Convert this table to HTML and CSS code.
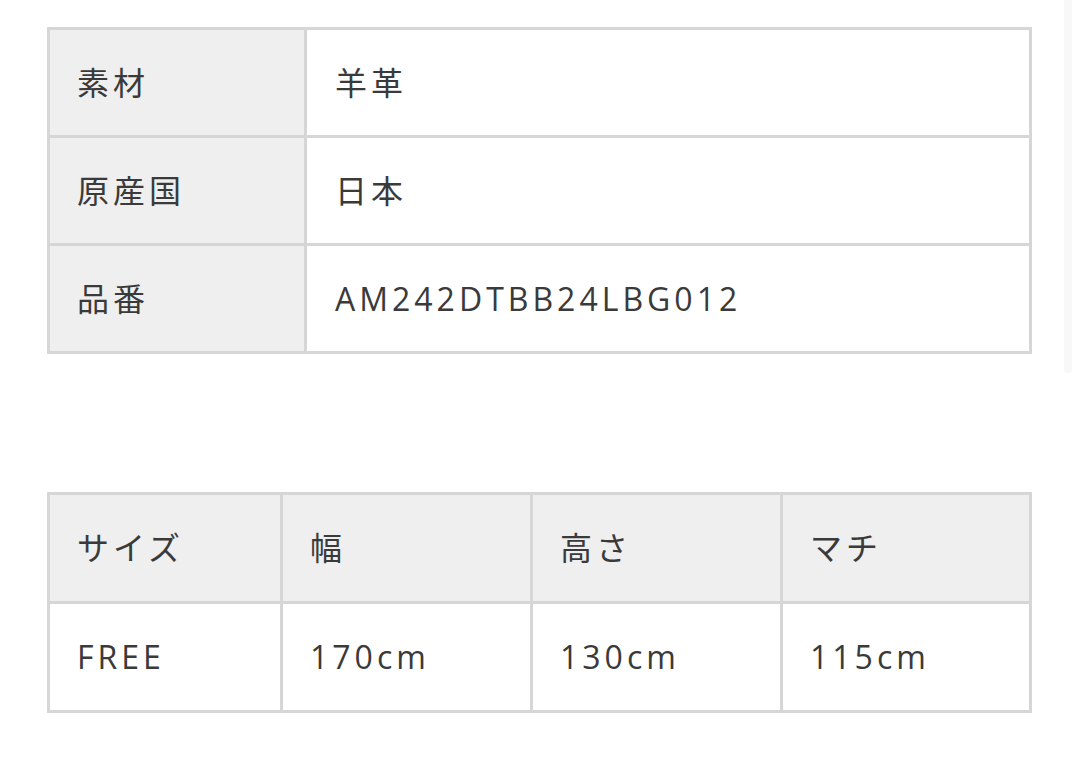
FILE: index.html
```html
<!DOCTYPE html>
<html lang="ja">
<head>
    <meta charset="UTF-8">
    <meta name="viewport" content="width=device-width, initial-scale=1.0">
    <title>商品詳細</title>
    <link rel="stylesheet" href="styles.css">
</head>
<body>
    <div class="page">
        <table class="spec spec-info">
            <tr>
                <th>素材</th>
                <td>羊革</td>
            </tr>
            <tr>
                <th>原産国</th>
                <td>日本</td>
            </tr>
            <tr>
                <th>品番</th>
                <td>AM242DTBB24LBG012</td>
            </tr>
        </table>

        <table class="spec spec-size">
            <tr>
                <th>サイズ</th>
                <th>幅</th>
                <th>高さ</th>
                <th>マチ</th>
            </tr>
            <tr>
                <td>FREE</td>
                <td>170cm</td>
                <td>130cm</td>
                <td>115cm</td>
            </tr>
        </table>
    </div>
    <div class="scroll-track"></div>
</body>
</html>
```

FILE: styles.css
```css
body {
    margin: 0;
    background: #fff;
    font-family: "Open Sans", "Noto Sans CJK JP", sans-serif;
    color: #3a3a3a;
}
.page {
    padding: 27px 0 0 47px;
    width: 985px;
    display: flex;
    flex-direction: column;
    gap: 138px;
}
.spec {
    width: 985px;
    border-collapse: collapse;
    border: 3px solid #d6d6d6;
    table-layout: fixed;
}
.spec th,
.spec td {
    border: 3px solid #d6d6d6;
    font-size: 32px;
    font-weight: normal;
    letter-spacing: 4px;
    text-align: left;
    padding: 0 0 0 27px;
    line-height: 1;
}
.spec th {
    background: #efefef;
}
.spec-info tr {
    height: 108px;
}
.spec-info th {
    width: 227px;
}
.spec-info td {
    padding-left: 28px;
}
.spec-size tr {
    height: 109px;
}
.spec-size th:nth-child(1) {
    width: 203px;
}
.spec-size th:nth-child(2),
.spec-size th:nth-child(3) {
    width: 220px;
}
.scroll-track {
    position: fixed;
    top: 0;
    left: 1064px;
    width: 8px;
    height: 373px;
    background: #f8f8f8;
    border-radius: 0 0 4px 4px;
}
```
